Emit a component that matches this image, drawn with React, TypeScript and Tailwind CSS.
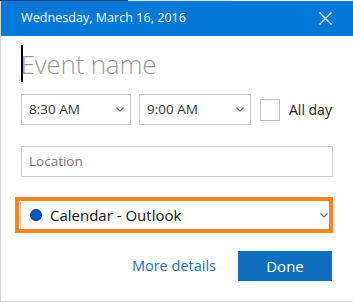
import React from "react";

const Chevron = ({ className = "" }: { className?: string }) => (
  <svg width="8" height="5" viewBox="0 0 8 5" className={className}>
    <path d="M0.5 0.5 L4 4 L7.5 0.5" fill="none" stroke="#666" strokeWidth="1.2" />
  </svg>
);

export default function App() {
  return (
    <div
      className="w-[353px] h-[303px] bg-white overflow-hidden"
      style={{ fontFamily: '"Open Sans", "Noto Sans", sans-serif' }}
    >
      <div className="flex h-[1px]">
        <div className="w-[128px] bg-[#123e86]" />
        <div className="w-[104px] bg-[#e6e6e6]" />
        <div className="flex-1 bg-white" />
      </div>
      <div className="h-[301px] border-l border-b border-[#d4d4d4] flex flex-col">
        <div className="h-[35px] bg-[#0078d7] flex items-center justify-between pl-[20px] pr-[21px] shrink-0">
          <span className="text-white text-[12.6px] leading-none">
            Wednesday, March 16, 2016
          </span>
          <svg width="13" height="13" viewBox="0 0 13 13">
            <path d="M0.5 0.5 L12.5 12.5 M12.5 0.5 L0.5 12.5" stroke="white" strokeWidth="1.3" />
          </svg>
        </div>
        <div className="pl-[20px] pr-[20px] flex flex-col">
          <div className="mt-[9px] h-[37px] flex items-center">
            <div className="w-[1.5px] h-[37px] bg-black" />
            <span className="text-[26px] font-light text-[#9a9a9a] leading-none tracking-[-0.2px] ml-[-2px]">
              Event name
            </span>
          </div>
          <div className="mt-[12px] flex items-center h-[31px]">
            <div className="w-[110px] h-[31px] border border-[#cccccc] flex items-center justify-between pl-[7px] pr-[6px]">
              <span className="text-[13.5px] text-[#333]">8:30 AM</span>
              <Chevron />
            </div>
            <div className="ml-[8px] w-[112px] h-[31px] border border-[#cccccc] flex items-center justify-between pl-[7px] pr-[6px]">
              <span className="text-[13.5px] text-[#333]">9:00 AM</span>
              <Chevron />
            </div>
            <div className="ml-[9px] w-[20px] h-[22px] border border-[#bdbdbd]" />
            <span className="ml-[9px] text-[14px] text-[#222]">All day</span>
          </div>
          <div className="mt-[21px] h-[31px] border border-[#cccccc] flex items-center pl-[7px]">
            <span className="text-[13.5px] text-[#777]">Location</span>
          </div>
          <div className="mt-[20px] ml-[-6px] w-[318px] h-[36px] border-[4px] border-[#f7841f] flex">
            <div className="flex-1 border-l border-[#c8c8c8] ml-[1px] flex items-center pl-[9px] pr-[1px]">
              <div className="w-[12px] h-[12px] rounded-full bg-[#0b57c8] border border-[#0a2f73]" />
              <span className="ml-[8px] text-[15px] text-[#111] leading-none">Calendar - Outlook</span>
              <div className="flex-1" />
              <Chevron />
            </div>
          </div>
          <div className="mt-[18px] flex items-center justify-end h-[30px] pr-[1px]">
            <span className="text-[14.5px] text-[#1a6fc3]">More details</span>
            <div className="ml-[22px] w-[94px] h-[30px] bg-[#106ebe] flex items-center justify-center">
              <span className="text-[15px] text-white">Done</span>
            </div>
          </div>
        </div>
      </div>
    </div>
  );
}
